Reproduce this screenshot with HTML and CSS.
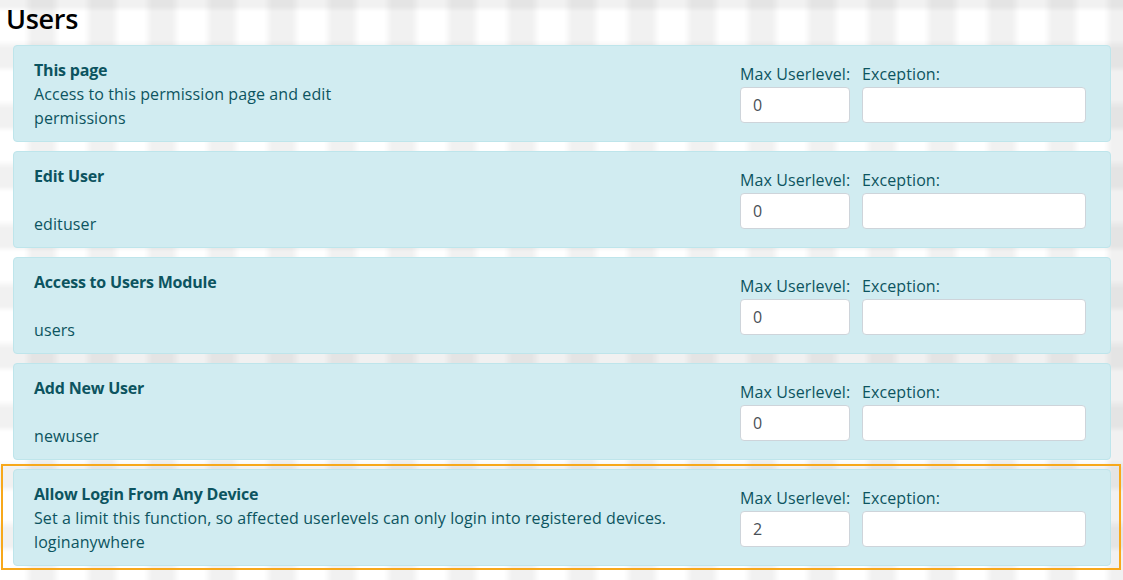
FILE: index.html
```html
<!DOCTYPE html>
<html lang="en">
<head>
<meta charset="utf-8">
<title>Users</title>
<link rel="stylesheet" href="styles.css">
</head>
<body>
<div class="page">
  <h1 class="page-title">Users</h1>
  <div class="perm-list">
    <div class="perm-wrap">
      <div class="perm-card">
        <div class="perm-info">
          <div class="perm-name">This page</div>
          <div class="perm-desc">Access to this permission page and edit</div>
          <div class="perm-key">permissions</div>
        </div>
        <div class="perm-fields">
          <div class="field field-level">
            <label class="field-label">Max Userlevel:</label>
            <input class="field-input" type="text" value="0">
          </div>
          <div class="field field-exc">
            <label class="field-label">Exception:</label>
            <input class="field-input" type="text" value="">
          </div>
        </div>
      </div>
    </div>
    <div class="perm-wrap">
      <div class="perm-card">
        <div class="perm-info">
          <div class="perm-name">Edit User</div>
          <div class="perm-desc">&nbsp;</div>
          <div class="perm-key">edituser</div>
        </div>
        <div class="perm-fields">
          <div class="field field-level">
            <label class="field-label">Max Userlevel:</label>
            <input class="field-input" type="text" value="0">
          </div>
          <div class="field field-exc">
            <label class="field-label">Exception:</label>
            <input class="field-input" type="text" value="">
          </div>
        </div>
      </div>
    </div>
    <div class="perm-wrap">
      <div class="perm-card">
        <div class="perm-info">
          <div class="perm-name">Access to Users Module</div>
          <div class="perm-desc">&nbsp;</div>
          <div class="perm-key">users</div>
        </div>
        <div class="perm-fields">
          <div class="field field-level">
            <label class="field-label">Max Userlevel:</label>
            <input class="field-input" type="text" value="0">
          </div>
          <div class="field field-exc">
            <label class="field-label">Exception:</label>
            <input class="field-input" type="text" value="">
          </div>
        </div>
      </div>
    </div>
    <div class="perm-wrap">
      <div class="perm-card">
        <div class="perm-info">
          <div class="perm-name">Add New User</div>
          <div class="perm-desc">&nbsp;</div>
          <div class="perm-key">newuser</div>
        </div>
        <div class="perm-fields">
          <div class="field field-level">
            <label class="field-label">Max Userlevel:</label>
            <input class="field-input" type="text" value="0">
          </div>
          <div class="field field-exc">
            <label class="field-label">Exception:</label>
            <input class="field-input" type="text" value="">
          </div>
        </div>
      </div>
    </div>
    <div class="perm-wrap is-highlighted">
      <div class="perm-card">
        <div class="perm-info">
          <div class="perm-name">Allow Login From Any Device</div>
          <div class="perm-desc">Set a limit this function, so affected userlevels can only login into registered devices.</div>
          <div class="perm-key">loginanywhere</div>
        </div>
        <div class="perm-fields">
          <div class="field field-level">
            <label class="field-label">Max Userlevel:</label>
            <input class="field-input" type="text" value="2">
          </div>
          <div class="field field-exc">
            <label class="field-label">Exception:</label>
            <input class="field-input" type="text" value="">
          </div>
        </div>
      </div>
    </div>
  </div>
</div>
</body>
</html>
```

FILE: styles.css
```css
html, body {
  margin: 0;
  padding: 0;
}

body {
  font-family: "Open Sans", "Noto Sans", sans-serif;
  font-size: 16px;
  color: #0c5460;
  background-color: #ffffff;
  background-image:
    linear-gradient(90deg,
      rgba(0,0,0,0) 0px, rgba(0,0,0,0) 24px,
      rgba(0,0,0,0.055) 32px, rgba(0,0,0,0.055) 52px,
      rgba(0,0,0,0) 60px),
    linear-gradient(180deg,
      rgba(0,0,0,0.055) 0px, rgba(0,0,0,0.055) 6px,
      rgba(0,0,0,0) 12px, rgba(0,0,0,0) 40px,
      rgba(0,0,0,0.055) 48px, rgba(0,0,0,0.055) 60px);
  background-size: 60px 60px, 60px 60px;
  background-position: 0 0, 0 0;
  width: 1123px;
  height: 580px;
  overflow: hidden;
}

.page {
  display: flex;
  flex-direction: column;
}

.page-title {
  margin: 0;
  padding: 2px 0 0 6px;
  height: 38px;
  font-size: 27px;
  line-height: 34px;
  font-weight: 600;
  color: #000000;
  letter-spacing: -0.3px;
}

.perm-list {
  display: flex;
  flex-direction: column;
}

.perm-wrap {
  margin-left: 1px;
  width: 1120px;
  box-sizing: border-box;
  border: 2px solid transparent;
  padding: 3px 8px 2px 10px;
}

.perm-wrap.is-highlighted {
  border-color: #f7a81b;
}

.perm-card {
  box-sizing: border-box;
  height: 97px;
  display: flex;
  justify-content: space-between;
  align-items: flex-start;
  background: #d1ecf1;
  border: 1px solid #bee5eb;
  border-radius: 4px;
  padding: 12px 24px 11px 20px;
}

.perm-info {
  display: flex;
  flex-direction: column;
  line-height: 24px;
}

.perm-name {
  font-weight: 700;
  letter-spacing: -0.2px;
}

.perm-desc,
.perm-key {
  font-weight: 400;
  letter-spacing: 0.1px;
}

.perm-fields {
  display: flex;
  gap: 12px;
  margin-top: 4px;
}

.field {
  display: flex;
  flex-direction: column;
}

.field-level {
  width: 110px;
}

.field-exc {
  width: 224px;
}

.field-label {
  line-height: 24px;
  height: 24px;
  margin-bottom: 1px;
  font-weight: 400;
  letter-spacing: 0.1px;
  white-space: nowrap;
}

.field-input {
  box-sizing: border-box;
  width: 100%;
  height: 36px;
  margin: 0;
  padding: 0 12px;
  font-family: "Open Sans", "Noto Sans", sans-serif;
  font-size: 16px;
  color: #495057;
  background: #ffffff;
  border: 1px solid #ced4da;
  border-radius: 4px;
  outline: none;
}
```
